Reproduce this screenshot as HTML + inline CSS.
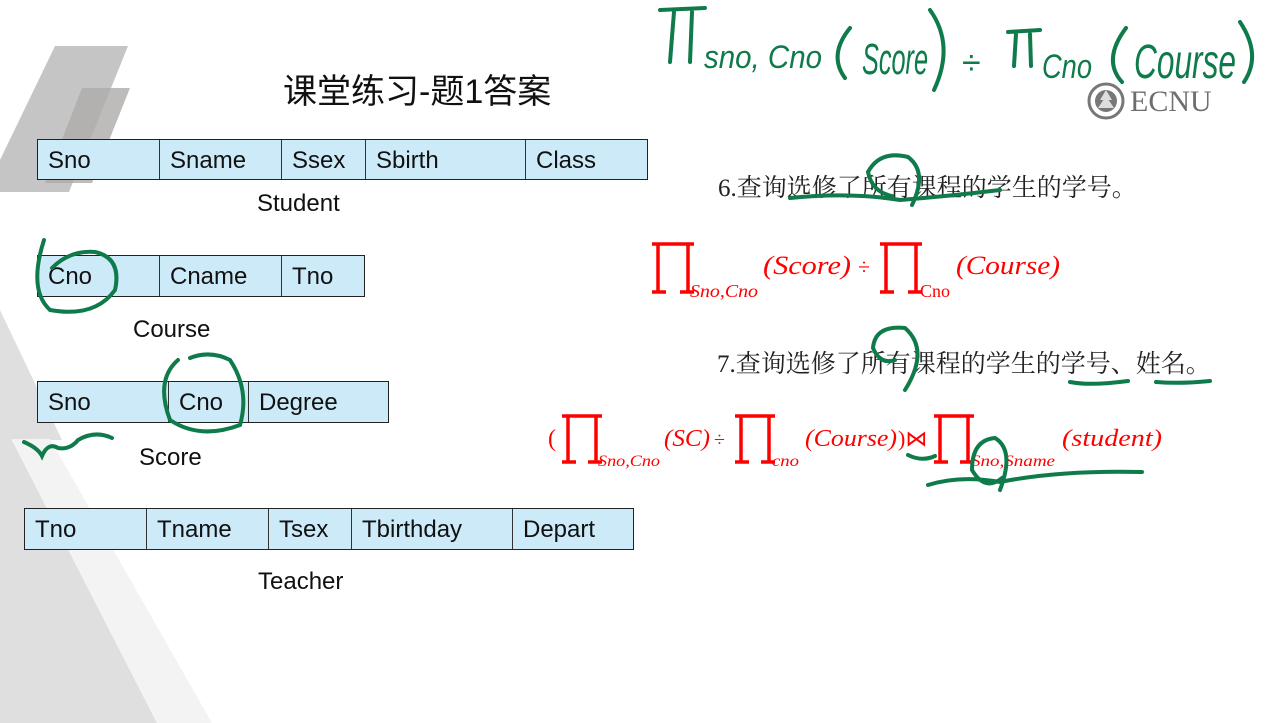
<!DOCTYPE html>
<html><head><meta charset="utf-8"><style>
body{margin:0;width:1272px;height:723px;overflow:hidden;background:#fff;position:relative;font-family:"Liberation Sans","Noto Sans CJK SC",sans-serif}
.t{position:absolute;display:flex;border:1px solid #222;background:#cdeaf9;height:41px;box-sizing:border-box}
.t div{border-right:1px solid #333;font-size:24px;line-height:42px;padding-left:10px;box-sizing:border-box;color:#111}
.t div:last-child{border-right:none}
.lbl{position:absolute;font-size:24px;color:#111}
.cn{position:absolute;font-family:"Liberation Serif","Noto Serif CJK SC",serif;font-size:24px;color:#222;white-space:nowrap}
svg{position:absolute;left:0;top:0}
</style></head><body>
<svg width="1272" height="723">
<polygon points="55,46 128,46 69,192 0,192 0,160" fill="#c6c5c5"/>
<polygon points="82,88 130,88 92,183 45,183" fill="#aeaaaa" opacity="0.8"/>
<polygon points="0,310 62,440 12,440 157,723 0,723" fill="#e0dfe0"/>
<polygon points="12,439 50,439 212,723 157,723" fill="#f3f3f3"/>
</svg>
<div class="cn" style="left:283px;top:64px;font-family:'Liberation Sans','Noto Sans CJK SC',sans-serif;font-size:34px;color:#111">课堂练习-题1答案</div>

<div class="t" style="left:37px;top:139px;width:611px"><div style="width:122px">Sno</div><div style="width:122px">Sname</div><div style="width:84px">Ssex</div><div style="width:160px">Sbirth</div><div style="flex:1">Class</div></div>
<div class="lbl" style="left:257px;top:190px">Student</div>
<div class="t" style="left:37px;top:255px;width:328px;height:42px"><div style="width:122px">Cno</div><div style="width:122px">Cname</div><div style="flex:1">Tno</div></div>
<div class="lbl" style="left:133px;top:316px">Course</div>
<div class="t" style="left:37px;top:381px;width:352px;height:42px"><div style="width:131px">Sno</div><div style="width:80px">Cno</div><div style="flex:1">Degree</div></div>
<div class="lbl" style="left:139px;top:444px">Score</div>
<div class="t" style="left:24px;top:508px;width:610px;height:42px"><div style="width:122px">Tno</div><div style="width:122px">Tname</div><div style="width:83px">Tsex</div><div style="width:161px">Tbirthday</div><div style="flex:1">Depart</div></div>
<div class="lbl" style="left:258px;top:568px">Teacher</div>

<div class="cn" style="left:718px;top:168px;font-size:25px">6.查询选修了所有课程的学生的学号。</div>
<div class="cn" style="left:717px;top:344px;font-size:25px">7.查询选修了所有课程的学生的学号、姓名。</div>

<svg width="1272" height="723" font-family="Liberation Serif,serif" fill="#f00">
<g stroke="#f00" stroke-width="3.5" fill="none">
<path d="M652 244H694M658 244V292M688 244V292M652 292H666M680 292H694"/>
<path d="M880 244H922M886 244V292M916 244V292M880 292H894M908 292H922"/>
<path d="M562 416H602M568 416V462M596 416V462M562 462H576M588 462H602"/>
<path d="M735 416H775M741 416V462M769 416V462M735 462H749M761 462H775"/>
<path d="M934 416H974M940 416V462M968 416V462M934 462H948M960 462H974"/>
</g>
<g font-style="italic">
<text x="690" y="297" font-size="18" textLength="68" lengthAdjust="spacingAndGlyphs">Sno,Cno</text>
<text x="763" y="274" font-size="26" textLength="88" lengthAdjust="spacingAndGlyphs">(Score)</text>
<text x="858" y="274" font-size="22" font-style="normal">÷</text>
<text x="920" y="297" font-size="18" font-style="normal">Cno</text>
<text x="956" y="274" font-size="26" textLength="104" lengthAdjust="spacingAndGlyphs">(Course)</text>
<text x="548" y="446" font-size="24" font-style="normal">(</text>
<text x="598" y="466" font-size="16" textLength="62" lengthAdjust="spacingAndGlyphs">Sno,Cno</text>
<text x="664" y="446" font-size="24" textLength="46" lengthAdjust="spacingAndGlyphs">(SC)</text>
<text x="714" y="446" font-size="20" font-style="normal">÷</text>
<text x="772" y="466" font-size="16" textLength="27" lengthAdjust="spacingAndGlyphs">cno</text>
<text x="805" y="446" font-size="24" textLength="92" lengthAdjust="spacingAndGlyphs">(Course)</text>
<text x="898" y="446" font-size="22" font-style="normal">)⋈</text>
<text x="971" y="466" font-size="16" textLength="84" lengthAdjust="spacingAndGlyphs">Sno,Sname</text>
<text x="1062" y="446" font-size="24" textLength="100" lengthAdjust="spacingAndGlyphs">(student)</text>
</g>
</svg>

<svg width="1272" height="723" fill="#6e6e6e">
<circle cx="1106" cy="101" r="17" fill="none" stroke="#777" stroke-width="3"/>
<circle cx="1106" cy="101" r="11" fill="#777"/>
<path d="M1106 90L1100 100H1112ZM1106 96L1098 108H1114Z" fill="#ddd"/>
<text x="1130" y="111" font-family="Liberation Serif,serif" font-size="30" fill="#6e6e6e">ECNU</text>
</svg>

<svg width="1272" height="723" fill="none" stroke="#0f7a4a" stroke-width="4" stroke-linecap="round">
<path d="M660 10L705 8M674 12L670 62M692 12L690 62"/>
<path d="M1008 32L1040 30M1016 34L1014 66M1030 34L1031 66"/>
<path d="M850 28Q828 55 845 78"/>
<path d="M930 10Q955 45 934 90"/>
<path d="M1126 28Q1102 60 1122 82"/>
<path d="M1240 22Q1262 55 1244 82"/>
<path d="M790 198Q850 192 900 200Q950 196 1000 190"/>
<path d="M912 205Q928 172 908 157Q880 150 868 172Q872 192 892 196"/>
<path d="M905 390Q930 350 905 328Q875 325 873 348Q880 365 895 360"/>
<path d="M1070 382Q1090 386 1128 381M1156 382Q1180 384 1210 381"/>
<path d="M908 455Q922 462 935 456M928 485Q960 475 1000 482Q1060 470 1142 472"/>
<path d="M1000 490Q1015 450 995 438Q972 440 972 470Q985 492 1002 478"/>
<path d="M44 240Q28 290 50 310Q95 318 115 290Q122 258 95 252Q70 250 52 268"/>
<path d="M178 360Q155 380 170 420Q200 440 240 425Q250 390 230 360Q210 350 190 358"/>
<path d="M24 442Q38 448 42 456Q48 442 58 448Q70 450 78 440Q95 430 112 438"/>
</svg>
<svg width="1272" height="723" font-family="Liberation Sans,sans-serif" fill="#0f7a4a" font-style="italic">
<text x="704" y="68" font-size="32" textLength="118" lengthAdjust="spacingAndGlyphs">sno, Cno</text>
<text x="862" y="74" font-size="44" textLength="66" lengthAdjust="spacingAndGlyphs">Score</text>
<text x="962" y="74" font-size="34" font-style="normal">÷</text>
<text x="1042" y="78" font-size="34" textLength="50" lengthAdjust="spacingAndGlyphs">Cno</text>
<text x="1134" y="78" font-size="48" textLength="102" lengthAdjust="spacingAndGlyphs">Course</text>
</svg>
</body></html>
